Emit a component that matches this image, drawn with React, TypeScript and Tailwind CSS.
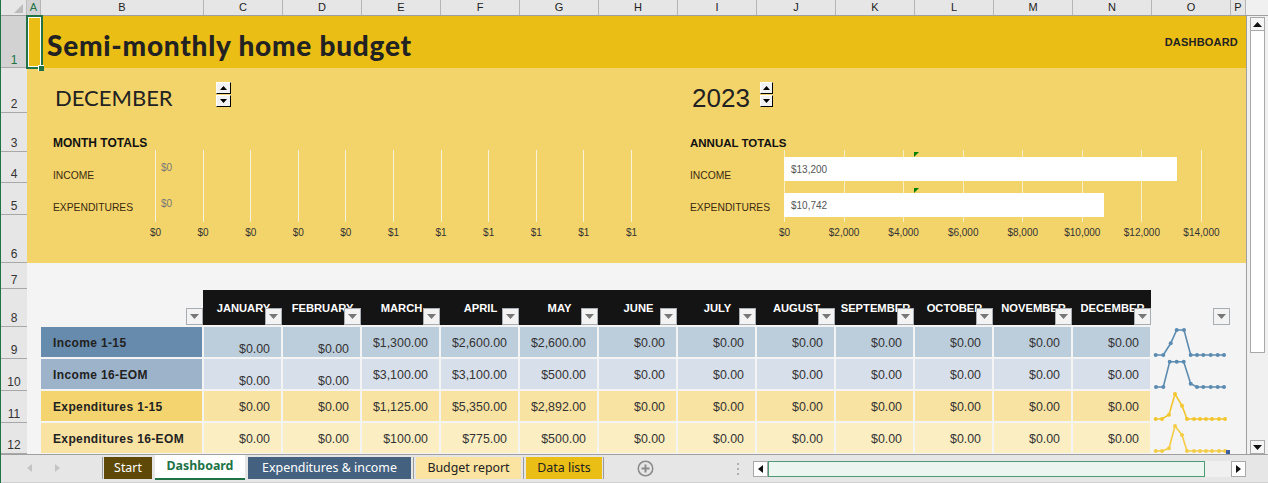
const MONTHS = ["JANUARY","FEBRUARY","MARCH","APRIL","MAY","JUNE","JULY","AUGUST","SEPTEMBER","OCTOBER","NOVEMBER","DECEMBER"];
const COLS: [string, number][] = [["A",14],["B",163],["C",79],["D",79],["E",79],["F",79],["G",79],["H",79],["I",79],["J",79],["K",79],["L",79],["M",79],["N",79],["O",79],["P",15]];
const ROWS: [string, number][] = [["1",52],["2",45],["3",39],["4",31],["5",32],["6",48],["7",26],["8",38],["9",32],["10",32],["11",32],["12",31]];

type Row = { label: string; labelBg: string; cellBg: string; values: string[]; low: boolean; color: string; pts: [number, number][] };
const Z = "$0.00";
const BASE_A: [number, number][] = [[4.7,28],[12.3,28],[19.7,16.3],[25.7,3],[33,3],[39.7,28],[46,28],[52.3,28],[59.7,28],[66.7,28],[73,28]];
const BASE_B: [number, number][] = [[5,28],[12.3,28],[18.7,2.7],[25.7,2.7],[32.7,2.7],[39.7,24.7],[46,28],[52.3,28],[59.7,28],[66.7,28],[73,28]];
const BASE_C: [number, number][] = [[4.7,28],[11,28],[18,23.7],[24,3],[31,14.7],[36,28],[43,28],[49,28],[55,28],[61,28],[68,28],[74,28]];
const BASE_D: [number, number][] = [[4.7,28],[11,28],[18,25.3],[24,3],[31,12],[36,28],[43,28],[49,28],[55,28],[61,28],[68,28],[74,28]];
const TABLE: Row[] = [
  { label: "Income 1-15", labelBg: "bg-[#678bac]", cellBg: "bg-[#bccddb]", values: [Z,Z,"$1,300.00","$2,600.00","$2,600.00",Z,Z,Z,Z,Z,Z,Z], low: true, color: "#5b8bb0", pts: BASE_A },
  { label: "Income 16-EOM", labelBg: "bg-[#9cb3ca]", cellBg: "bg-[#d7dfea]", values: [Z,Z,"$3,100.00","$3,100.00","$500.00",Z,Z,Z,Z,Z,Z,Z], low: true, color: "#5b8bb0", pts: BASE_B },
  { label: "Expenditures 1-15", labelBg: "bg-[#f3d46e]", cellBg: "bg-[#f9e3a2]", values: [Z,Z,"$1,125.00","$5,350.00","$2,892.00",Z,Z,Z,Z,Z,Z,Z], low: false, color: "#f2c62e", pts: BASE_C },
  { label: "Expenditures 16-EOM", labelBg: "bg-[#f9e3a2]", cellBg: "bg-[#fbeec2]", values: [Z,Z,"$100.00","$775.00","$500.00",Z,Z,Z,Z,Z,Z,Z], low: false, color: "#f4cd48", pts: BASE_D },
];

function Triangle({ up }: { up?: boolean }) {
  return (
    <svg width="9" height="5" viewBox="0 0 9 5" className="block">
      <path d={up ? "M4.5 0 L9 5 L0 5 Z" : "M0 0 L9 0 L4.5 5 Z"} fill="#111" />
    </svg>
  );
}

function Spinner({ w }: { w: string }) {
  return (
    <div className={`flex flex-col gap-px h-[25px] mt-[14px] bg-[#f3d46a] ${w}`}>
      {[true, false].map((up) => (
        <div key={String(up)} className="flex-1 flex items-center justify-center bg-[#f2f2f2] border-t border-l border-white border-r border-b border-r-black border-b-black">
          <svg width="7" height="4" viewBox="0 0 7 4" className="block"><path d={up ? "M3.5 0 L7 4 L0 4 Z" : "M0 0 L7 0 L3.5 4 Z"} fill="#000" /></svg>
        </div>
      ))}
    </div>
  );
}

function Filter({ className }: { className: string }) {
  return (
    <div className={`w-[17px] h-[17px] bg-[#f3f3f3] border border-[#a8adb3] flex items-center justify-center ${className}`}>
      <svg width="9" height="5" viewBox="0 0 9 5" className="block"><path d="M0 0 L9 0 L4.5 5 Z" fill="#777" /></svg>
    </div>
  );
}

function Plot({ width, lines, labels, colour, bars }: { width: string; lines: number; labels: string[]; colour: string; bars: React.ReactNode }) {
  return (
    <div className={`${width} flex flex-col`}>
      <div className="relative h-[72px] flex justify-between">
        {Array.from({ length: lines }).map((_, i) => <div key={i} className={`w-px h-full ${colour}`} />)}
        {bars}
      </div>
      <div className="flex justify-between mt-[5px]">
        {labels.map((l, i) => (
          <div key={i} className="w-px flex justify-center whitespace-nowrap text-[10px] leading-3 text-[#333]">{l}</div>
        ))}
      </div>
    </div>
  );
}

function Spark({ color, pts }: { color: string; pts: [number, number][] }) {
  return (
    <svg width="79" height="31" viewBox="0 0 79 31" className="block shrink-0">
      <polyline points={pts.map((p) => p.join(",")).join(" ")} fill="none" stroke={color} strokeWidth="1.6" />
      {pts.map((p, i) => <circle key={i} cx={p[0]} cy={p[1]} r="2" fill={color} />)}
    </svg>
  );
}

function Tab({ label, className }: { label: string; className: string }) {
  return <div className={`h-[22px] mt-[2px] flex items-center justify-center text-[12.4px] font-['Noto_Sans',sans-serif] ${className}`}>{label}</div>;
}

function Sep() {
  return <div className="w-px h-[22px] mt-[2px] bg-[#9a9a9a]" />;
}

export default function App() {
  return (
    <div className="relative w-[1268px] h-[483px] overflow-hidden flex flex-col bg-[#e6e6e6] border-l border-[#217346] font-['Liberation_Sans',Arial,sans-serif] text-[#222]">
      <div className="flex h-[16px] shrink-0 border-b border-[#9f9f9f]">
        <div className="w-[26px] flex items-end justify-end pr-[3px] pb-[2px] border-r border-[#bdbdbd]">
          <svg width="9" height="9" viewBox="0 0 9 9" className="block"><path d="M9 0 L9 9 L0 9 Z" fill="#bcbcbc" /></svg>
        </div>
        {COLS.map(([c, w]) => (
          <div key={c} style={{ width: w }} className={`shrink-0 flex items-center justify-center text-[11px] border-r border-[#b5b5b5] ${c === "A" ? "bg-[#d2d2d2] text-[#217346]" : ""}`}>{c}</div>
        ))}
        <div className="flex-1 bg-[#f0f0f0]" />
      </div>

      <div className="flex flex-1 min-h-0">
        <div className="w-[26px] shrink-0 flex flex-col">
          {ROWS.map(([r, h], i) => (
            <div key={r} style={{ height: h }} className={`shrink-0 flex items-end justify-center text-[12px] border-b border-[#a8a8a8] ${i === 0 ? "bg-[#d2d2d2] text-[#217346] leading-[14px]" : "text-[#333] leading-4"}`}>{r}</div>
          ))}
        </div>

        <div className="w-[1219px] shrink-0 flex flex-col min-h-0 overflow-hidden relative">
          <div className="h-[52px] shrink-0 bg-[#ebbe15] flex items-center justify-between pl-[20px] pr-[8px]">
            <div className="pt-[5px] text-[28px] leading-none font-black font-['Lato',sans-serif] tracking-[0.75px] text-[#222]">Semi-monthly home budget</div>
            <div className="text-[11px] font-bold tracking-[0.2px] text-[#222]">DASHBOARD</div>
          </div>
          <div className="h-[195px] shrink-0 bg-[#f3d46a] flex">
            <div className="w-[635px] shrink-0 flex flex-col pl-[26px]">
              <div className="h-[45px] shrink-0 flex items-start">
                <div className="w-[163px] mt-[19px] pl-[2px] text-[22px] leading-none font-normal font-['Lato',sans-serif] text-[#222]">DECEMBER</div>
                <Spinner w="w-[15px]" />
              </div>
              <div className="h-[37px] shrink-0 pt-[24px] text-[12px] leading-[13px] font-bold text-[#111]">MONTH TOTALS</div>
              <div className="flex">
                <div className="w-[102px] shrink-0 flex flex-col gap-[19px] pt-[19px] text-[10.3px] leading-[13px] text-[#3a2a10]">
                  <div>INCOME</div>
                  <div>EXPENDITURES</div>
                </div>
                <Plot width="w-[477px]" lines={11} colour="bg-[#f6f1dc]"
                  labels={["$0","$0","$0","$0","$0","$1","$1","$1","$1","$1","$1"]}
                  bars={
                    <div className="absolute left-[6px] top-[12px] flex flex-col gap-[24px] text-[10px] leading-3 text-[#777]">
                      <div>$0</div>
                      <div>$0</div>
                    </div>
                  } />
              </div>
            </div>
            <div className="flex-1 flex flex-col pl-[28px]">
              <div className="h-[45px] shrink-0 flex items-start">
                <div className="w-[70px] mt-[17px] pl-[2px] text-[26px] leading-none text-[#222]">2023</div>
                <Spinner w="w-[13px]" />
              </div>
              <div className="h-[37px] shrink-0 pt-[24px] text-[11.5px] leading-[13px] font-bold text-[#111]">ANNUAL TOTALS</div>
              <div className="flex">
                <div className="w-[94px] shrink-0 flex flex-col gap-[19px] pt-[19px] text-[10.3px] leading-[13px] text-[#3a2a10]">
                  <div>INCOME</div>
                  <div>EXPENDITURES</div>
                </div>
                <Plot width="w-[418px]" lines={8} colour="bg-[#f7eecb]"
                  labels={["$0","$2,000","$4,000","$6,000","$8,000","$10,000","$12,000","$14,000"]}
                  bars={
                    <div className="absolute left-0 top-[7px] w-full flex flex-col gap-[12px]">
                      <div className="h-[24px] w-[393px] bg-white flex items-center pl-[7px] text-[10px] text-[#555]">$13,200</div>
                      <div className="h-[24px] w-[320px] bg-white flex items-center pl-[7px] text-[10px] text-[#555]">$10,742</div>
                    </div>
                  } />
              </div>
            </div>
            <svg width="6" height="5" viewBox="0 0 6 5" className="absolute left-[887px] top-[136px]"><path d="M0 0 L5 0 L0 5 Z" fill="#008000" /></svg>
            <svg width="6" height="5" viewBox="0 0 6 5" className="absolute left-[887px] top-[172px]"><path d="M0 0 L5 0 L0 5 Z" fill="#008000" /></svg>
          </div>

          <div className="flex-1 min-h-0 bg-[#f4f4f4] pt-[27px] pl-[14px] overflow-hidden">
            <div className="flex h-[37px]">
              <div className="w-[162px] shrink-0 relative"><Filter className="absolute right-0 top-[18px]" /></div>
              <div className="flex h-[35px] bg-[#141414]">
                {MONTHS.map((m) => (
                  <div key={m} className="w-[79px] shrink-0 relative flex items-center justify-center pl-[2px] pt-px text-[11.2px] font-bold text-white whitespace-nowrap">
                    {m}
                    <Filter className="absolute right-0 top-[18px]" />
                  </div>
                ))}
              </div>
              <div className="w-[79px] shrink-0 relative"><Filter className="absolute right-0 top-[18px]" /></div>
            </div>
            {TABLE.map((row) => (
              <div key={row.label} className="flex h-[32px]">
                <div className={`w-[161px] h-[30px] mr-[2px] shrink-0 flex items-center pl-[12px] pt-px text-[12px] tracking-[0.37px] font-bold text-[#222] ${row.labelBg}`}>{row.label}</div>
                {row.values.map((v, i) => (
                  <div key={i} className={`w-[77px] h-[30px] mr-[2px] shrink-0 flex justify-end pr-[11px] text-[12.4px] leading-4 text-[#333] ${row.cellBg} ${row.low && i < 2 ? "items-end" : "items-center pt-px"}`}>{v}</div>
                ))}
                <div className="-ml-[1px]"><Spark color={row.color} pts={row.pts} /></div>
              </div>
            ))}
          </div>
        </div>

        <div className="flex-1 flex flex-col items-center pt-px bg-[#f0f0f0] border-l border-[#9f9f9f]">
          <div className="w-[15px] h-[14px] bg-[#f5f5f5] border border-[#a8a8a8] flex items-center justify-center"><Triangle up /></div>
          <div className="w-[15px] h-[322px] bg-white border border-[#a8a8a8] border-t-0" />
          <div className="flex-1" />
          <div className="w-[15px] h-[14px] bg-[#f5f5f5] border border-[#a8a8a8] flex items-center justify-center"><Triangle /></div>
        </div>
      </div>

      <div className="h-[29px] shrink-0 flex border-t border-b border-t-[#9f9f9f] border-b-[#cfcfcf] bg-[#e6e6e6]">
        <div className="w-[101px] shrink-0 flex items-center pl-[26px] gap-[23px] h-[26px]">
          <svg width="5" height="8" viewBox="0 0 5 8" className="block"><path d="M5 0 L5 8 L0 4 Z" fill="#c4c4c4" /></svg>
          <svg width="5" height="8" viewBox="0 0 5 8" className="block"><path d="M0 0 L0 8 L5 4 Z" fill="#c4c4c4" /></svg>
        </div>
        <Sep />
        <Tab label="Start" className="w-[48px] ml-[1px] bg-[#5e4908] text-white" />
        <div className="w-[90px] ml-[3px] h-[25px] bg-white border-b-2 border-[#217346] flex items-center justify-center text-[12.4px] font-bold font-['Noto_Sans',sans-serif] text-[#217346]">Dashboard</div>
        <Tab label="Expenditures & income" className="w-[163px] ml-[3px] bg-[#44617f] text-white" />
        <div className="w-[5px] flex justify-center"><Sep /></div>
        <Tab label="Budget report" className="w-[105px] bg-[#fbe3a1] text-[#222]" />
        <div className="w-[5px] flex justify-center"><Sep /></div>
        <Tab label="Data lists" className="w-[76px] bg-[#ebbe15] text-[#222]" />
        <div className="w-[3px] flex justify-center"><Sep /></div>
        <div className="w-[81px] h-[27px] flex items-center justify-center">
          <svg width="17" height="17" viewBox="0 0 17 17" className="block">
            <circle cx="8.5" cy="8.5" r="7.25" fill="none" stroke="#8a8a8a" strokeWidth="1.5" />
            <path d="M8.5 4.5 V12.5 M4.5 8.5 H12.5" stroke="#8a8a8a" strokeWidth="2" />
          </svg>
        </div>
        <div className="w-[67px] h-[27px] flex items-center pl-[51px]">
          <div className="w-[2px] h-[12px] flex flex-col justify-between">
            <div className="h-[2px] bg-[#b0b0b0]" />
            <div className="h-[2px] bg-[#b0b0b0]" />
            <div className="h-[2px] bg-[#b0b0b0]" />
          </div>
        </div>
        <div className="w-[493px] h-[16px] mt-[6px] flex bg-[#f0f0f0]">
          <div className="w-[15px] h-full bg-white border border-[#a8a8a8] flex items-center justify-center">
            <svg width="5" height="8" viewBox="0 0 5 8" className="block"><path d="M5 0 L5 8 L0 4 Z" fill="#111" /></svg>
          </div>
          <div className="w-[437px] h-full bg-[#edf5f0] border border-[#4f9a75]" />
          <div className="flex-1" />
          <div className="w-[15px] h-full bg-white border border-[#a8a8a8] flex items-center justify-center">
            <svg width="5" height="8" viewBox="0 0 5 8" className="block"><path d="M0 0 L0 8 L5 4 Z" fill="#111" /></svg>
          </div>
        </div>
      </div>

      <div className="absolute left-[25px] top-[15px] w-[17px] h-[54px] border-2 border-[#217346]">
        <div className="w-full h-full border border-white" />
      </div>
      <div className="absolute left-[37px] top-[65px] w-[6px] h-[6px] bg-[#217346] border border-white border-r-0 border-b-0" />
      <div className="absolute left-[1225px] top-[450px] w-[4px] h-[4px] bg-[#3f5fa0]" />
    </div>
  );
}
